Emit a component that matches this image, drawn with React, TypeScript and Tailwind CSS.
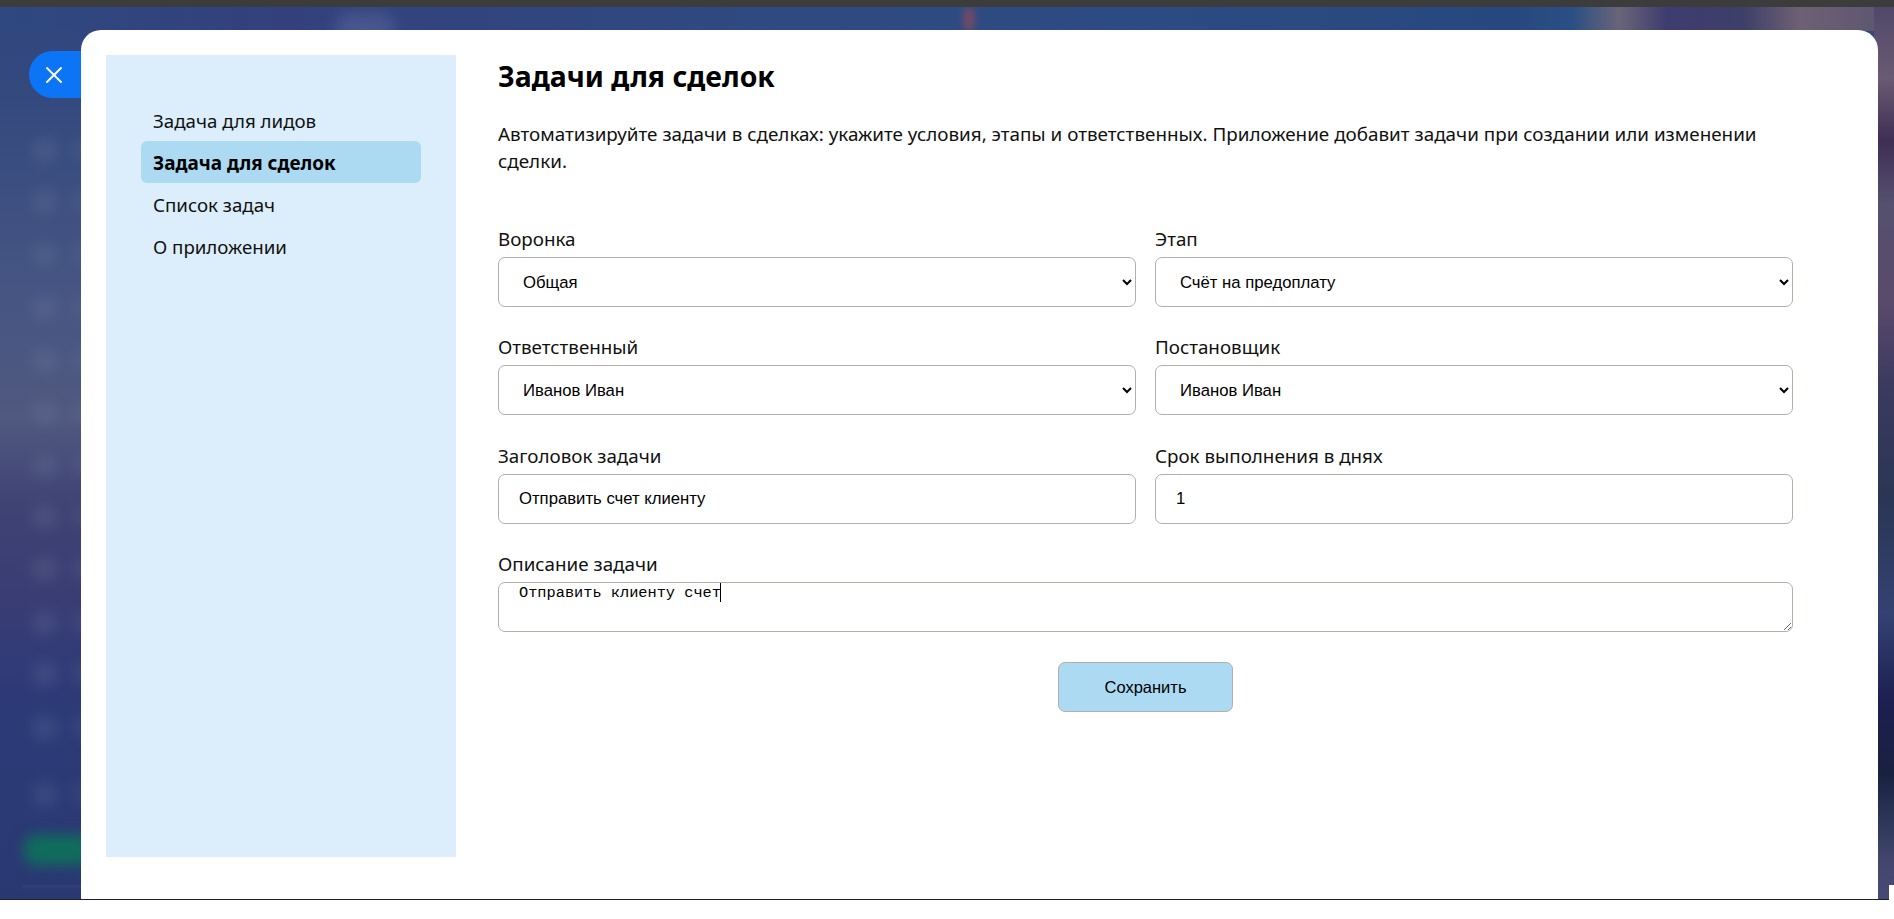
import React from "react";
import { X } from "lucide-react";

const blobs = [
  "top-[131px]", "top-[183px]", "top-[236px]", "top-[289px]", "top-[342px]", "top-[394px]", "top-[447px]",
  "top-[497px]", "top-[550px]", "top-[604px]", "top-[655px]", "top-[709px]", "top-[776px]",
];

const uiFont = "font-['Noto_Sans','Open_Sans',sans-serif]";
const fieldBase =
  "block w-full h-[50px] rounded-[7px] border border-[#b3afab] bg-white text-[16.7px] text-black font-['Liberation_Sans',Arial,sans-serif] outline-none";

function Label({ children }: { children: React.ReactNode }) {
  return <label className={`block h-[27px] mb-[4px] text-[18.8px] leading-[26px] text-[#111] ${uiFont}`}>{children}</label>;
}

function SelectField({ label, value }: { label: string; value: string }) {
  return (
    <div>
      <Label>{label}</Label>
      <select defaultValue={value} className={`${fieldBase} pl-[20px] pr-0`}>
        <option>{value}</option>
      </select>
    </div>
  );
}

function InputField({ label, value }: { label: string; value: string }) {
  return (
    <div>
      <Label>{label}</Label>
      <input defaultValue={value} className={`${fieldBase} px-[20px]`} />
    </div>
  );
}

export default function App() {
  return (
    <div className="w-full h-[919px] overflow-hidden bg-white flex flex-col relative">
      <div className="h-[7px] shrink-0 bg-[#3c3c3c]" />
      <div className="relative h-[893px] shrink-0 border-b border-[#1d1f33] overflow-hidden flex bg-[linear-gradient(180deg,#30467e_0%,#34497e_10%,#465583_32%,#50597f_46%,#3f4274_56%,#3a3d74_66%,#2c3a78_78%,#2a3872_100%)]">
        {/* blurred page behind the slider */}
        <div className="absolute left-0 right-0 top-0 h-[24px] bg-[linear-gradient(90deg,#2f4880_0%,#33407c_15%,#2f4a80_40%,#2c4b82_60%,#27487e_80%,#2a4f84_83%,#6a6478_85.5%,#3e3c70_88%,#3c3f68_92%,#6e6074_95%,#5a5570_100%)]" />
        <div className="absolute left-[335px] top-[6px] w-[60px] h-[30px] rounded-full bg-[#56669a] opacity-60 blur-[8px]" />
        <div className="absolute left-[963px] top-0 w-[12px] h-[24px] rounded-full bg-[#8a4a5e] opacity-70 blur-[3px]" />
        <div className="absolute right-0 top-0 bottom-0 w-[20px] bg-[linear-gradient(180deg,#50486a_0%,#6a5a72_8%,#3f2e55_15%,#55506f_22%,#5a4a6c_33%,#3c3a60_42%,#2a3654_55%,#334272_68%,#1c1f50_78%,#192140_86%,#2f3a5c_92%,#45466f_96%,#454a74_100%)]" />
        {blobs.map((top) => (
          <React.Fragment key={top}>
            <div className={`absolute left-[32px] ${top} w-[26px] h-[24px] rounded-full bg-[#7d8ba8] opacity-20 blur-[7px]`} />
            <div className={`absolute left-[72px] ${top} w-[20px] h-[22px] rounded-full bg-[#7d8ba8] opacity-15 blur-[7px]`} />
          </React.Fragment>
        ))}
        <div className="absolute left-[24px] top-[828px] w-[70px] h-[30px] rounded-[10px] bg-[#0f6e5c] blur-[7px]" />
        <div className="absolute left-[22px] top-[879px] w-[60px] h-[1px] bg-[#3f6a80] opacity-60 blur-[1px]" />

        {/* close tab */}
        <div className="absolute left-[29px] top-[44px] w-[60px] h-[47px] rounded-l-full bg-[#0b75f5] flex items-center pl-[11px] text-white">
          <X size={28} strokeWidth={1.6} />
        </div>

        {/* panel */}
        <div className="relative ml-[81px] mt-[23px] w-[1797px] h-[869px] bg-white rounded-t-[20px] flex pl-[25px] pt-[25px] pr-[85px]">
          <aside className={`w-[350px] h-[802px] shrink-0 bg-[#dceefb] pt-[44px] pl-[35px] ${uiFont}`}>
            <nav className="w-[280px] text-[18.7px] leading-[44px] text-[#111]">
              <div className="h-[42px] px-[12px]">Задача для лидов</div>
              <div className="h-[42px] px-[12px] rounded-[6px] bg-[#acdaf2] font-bold text-[18.9px] text-black">Задача для сделок</div>
              <div className="h-[42px] px-[12px]">Список задач</div>
              <div className="h-[42px] px-[12px]">О приложении</div>
            </nav>
          </aside>

          <main className="flex-1 ml-[42px] min-w-0">
            <h1 className={`h-[43px] text-[28.4px] leading-[43px] font-bold text-black ${uiFont}`}>Задачи для сделок</h1>
            <p className={`mt-[23px] text-[18.85px] leading-[27px] text-[#111] ${uiFont}`}>
              Автоматизируйте задачи в сделках: укажите условия, этапы и ответственных. Приложение добавит задачи при создании или изменении сделки.
            </p>
            <div className="mt-[51px] grid grid-cols-2 gap-x-[19px] gap-y-[27.33px]">
              <SelectField label="Воронка" value="Общая" />
              <SelectField label="Этап" value="Счёт на предоплату" />
              <SelectField label="Ответственный" value="Иванов Иван" />
              <SelectField label="Постановщик" value="Иванов Иван" />
              <InputField label="Заголовок задачи" value="Отправить счет клиенту" />
              <InputField label="Срок выполнения в днях" value="1" />
              <div className="col-span-2 relative">
                <Label>Описание задачи</Label>
                <textarea
                  defaultValue="Отправить клиенту счет"
                  className="block w-full h-[50px] rounded-[7px] border border-[#b3afab] bg-white px-[20px] pt-0 text-[15.3px] leading-[20px] text-black font-['Liberation_Mono',monospace] outline-none"
                />
                <span className="absolute left-[222px] top-[32px] w-[1px] h-[19px] bg-black" />
              </div>
            </div>
            <div className="mt-[30px] flex justify-center">
              <button className="w-[175px] h-[50px] rounded-[7px] border border-[#b3afab] bg-[#acdaf2] text-[16.5px] text-black font-['Liberation_Sans',Arial,sans-serif]">
                Сохранить
              </button>
            </div>
          </main>
        </div>
      </div>
      {/* white notch, bottom right corner */}
      <div className="absolute right-0 top-[885px] w-[5px] h-[34px] bg-white" />
    </div>
  );
}
